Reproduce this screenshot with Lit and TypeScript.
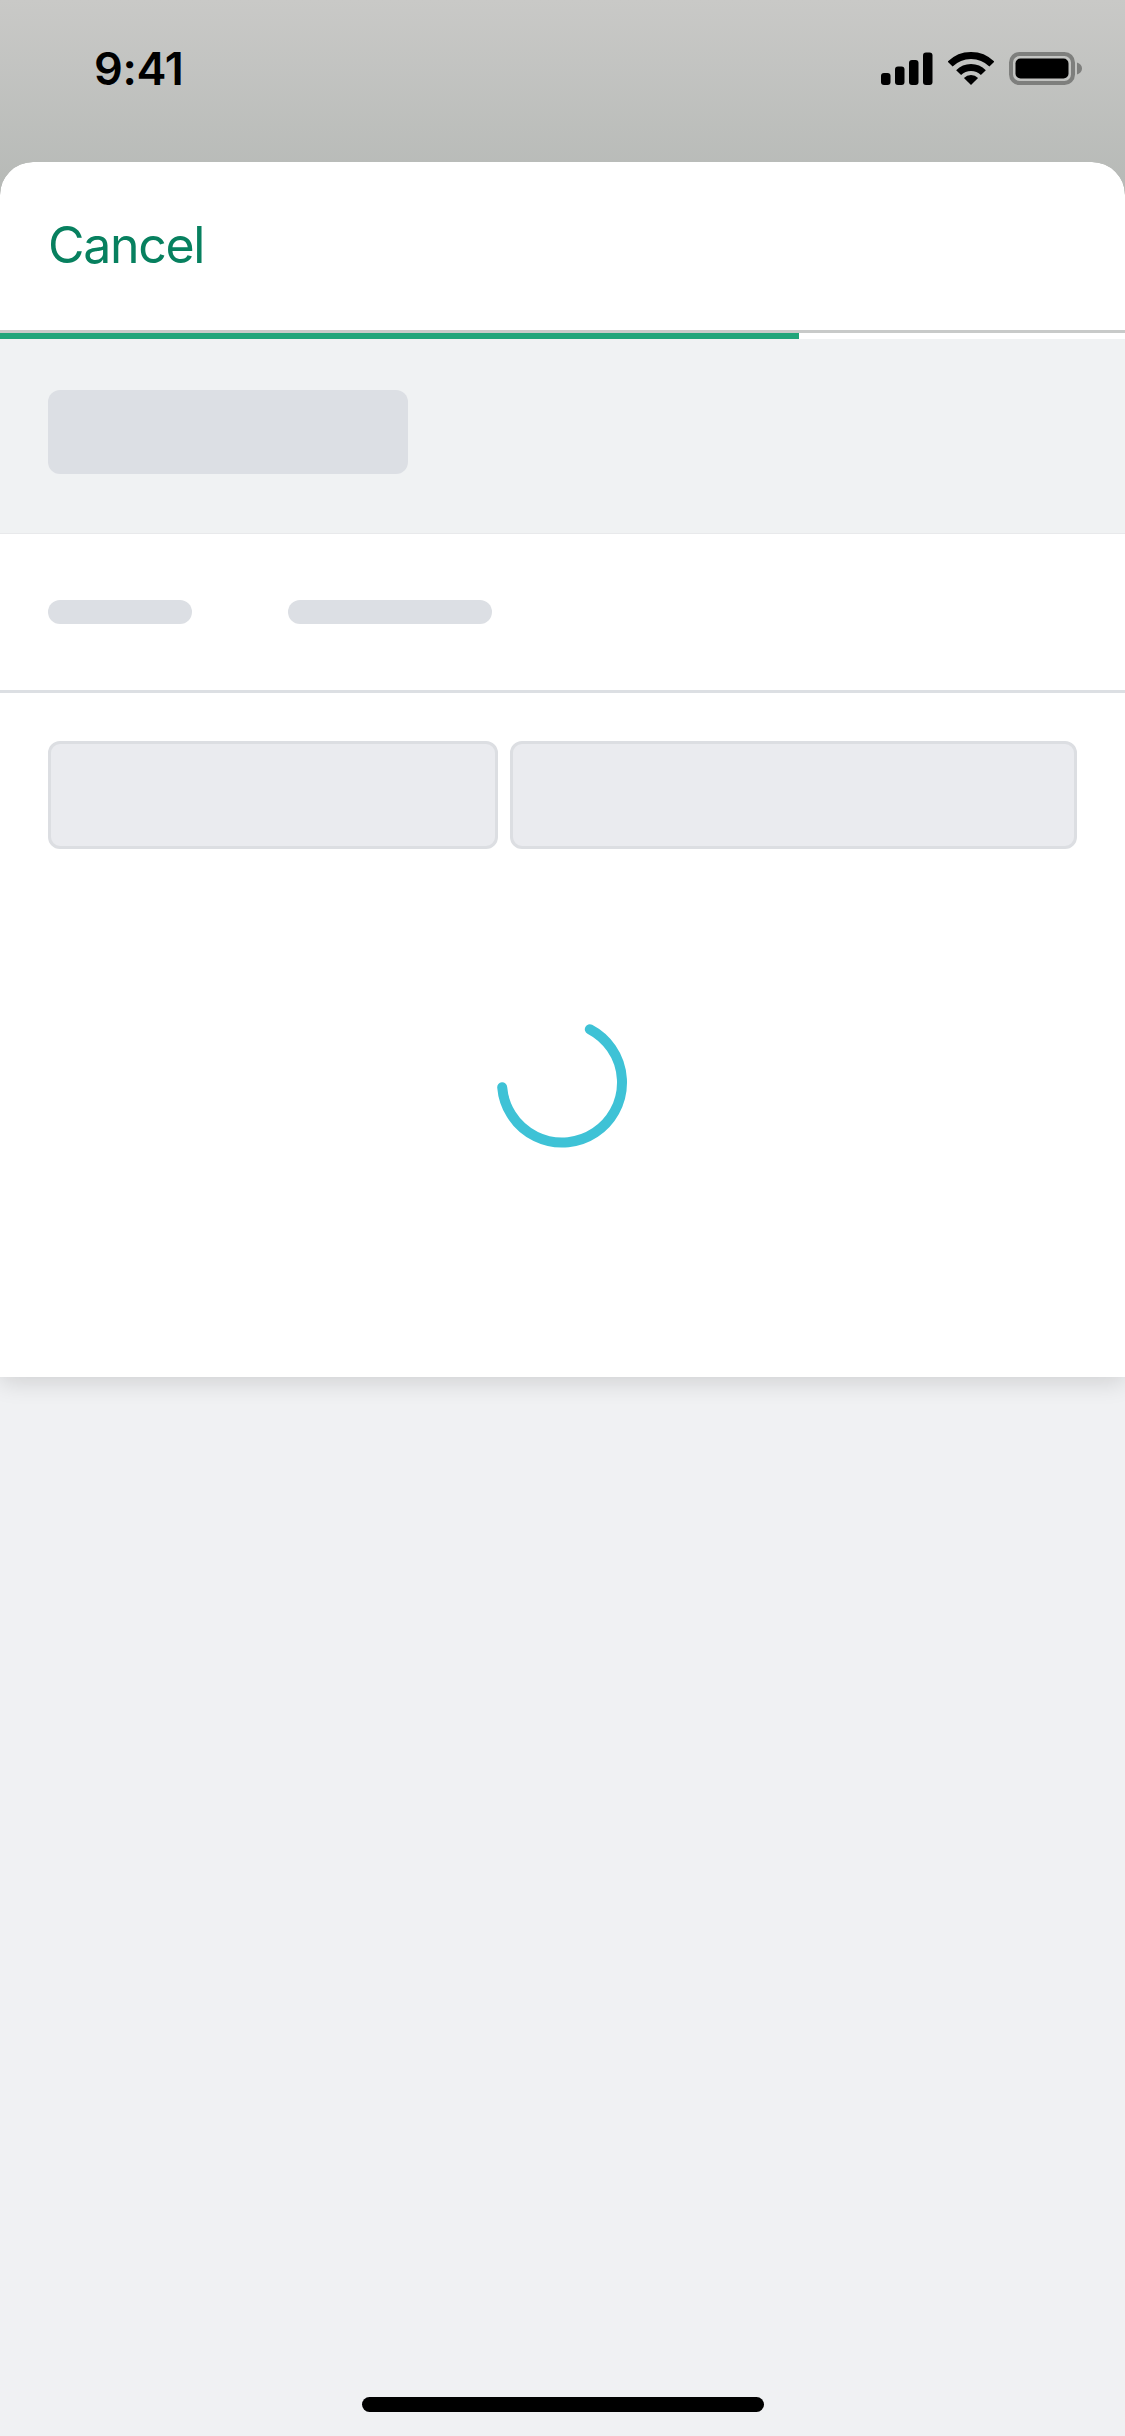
import { LitElement, css, html } from 'lit';
import { customElement } from 'lit/decorators.js';

@customElement('app-root')
export class AppRoot extends LitElement {
  static styles = css`
    :host {
      display: flex;
      flex-direction: column;
      height: 2436px;
      background: #f0f1f3;
      font-family: Inter, 'Liberation Sans', sans-serif;
    }

    .top {
      background: linear-gradient(#c9c9c7, #b6b9b6) no-repeat;
      background-size: 100% 196px;
    }

    .status-bar {
      height: 162px;
      box-sizing: border-box;
      padding: 0 43px 0 94px;
      display: flex;
      justify-content: space-between;
      align-items: flex-start;
    }

    .time {
      margin-top: 42px;
      font-size: 45px;
      line-height: 54px;
      font-weight: 600;
      color: #000;
      letter-spacing: -0.3px;
    }

    .status-icons {
      margin-top: 52px;
      display: flex;
      align-items: flex-start;
      gap: 15px;
    }

    .sheet {
      background: #fff;
      border-radius: 33px 33px 0 0;
      box-shadow: 0 5px 24px rgba(0, 0, 0, 0.14);
      clip-path: inset(0 0 -60px 0 round 33px 33px 0 0);
    }

    .sheet-header {
      height: 171px;
      box-sizing: border-box;
      padding: 0 48px;
      display: flex;
      align-items: center;
      border-bottom: 3px solid #c8cac9;
    }

    .cancel {
      font-size: 50px;
      line-height: 60px;
      letter-spacing: -1.3px;
      color: #07805f;
      margin-top: -3px;
    }

    .progress {
      height: 6px;
      background: #fff;
    }

    .progress-fill {
      height: 100%;
      background: #20a57a;
    }

    .summary {
      height: 195px;
      box-sizing: border-box;
      padding: 51px 48px 0;
      background: #f0f2f3;
      border-bottom: 1px solid #e8e9eb;
    }

    .skeleton {
      background: #dcdfe4;
    }

    .skeleton-title {
      width: 360px;
      height: 84px;
      border-radius: 12px;
    }

    .tabs {
      height: 159px;
      box-sizing: border-box;
      padding: 0 48px;
      display: flex;
      align-items: center;
      gap: 96px;
      border-bottom: 3px solid #dcdfe3;
    }

    .skeleton-pill {
      height: 24px;
      border-radius: 12px;
    }

    .options {
      padding: 48px 48px 0;
      display: grid;
      grid-template-columns: 450px 567px;
      gap: 12px;
    }

    .option {
      height: 108px;
      box-sizing: border-box;
      background: #eaebef;
      border: 3px solid #dcdee2;
      border-radius: 12px;
    }

    .loading {
      height: 528px;
      box-sizing: border-box;
      padding-top: 167px;
      display: flex;
      justify-content: center;
      align-items: flex-start;
    }

    .spinner {
      display: block;
    }

    .spacer {
      flex: 1;
    }

    .home-bar {
      align-self: center;
      width: 402px;
      height: 15px;
      margin-bottom: 24px;
      border-radius: 8px;
      background: #000;
    }
  `;

  render() {
    return html`
      <div class="top">
        <div class="status-bar">
          <span class="time">9:41</span>
          <div class="status-icons">
            <svg width="52" height="33" viewBox="0 0 52 33" fill="#000">
              <rect x="0" y="21" width="9.5" height="12" rx="3" />
              <rect x="14" y="14.5" width="9.5" height="18.5" rx="3" />
              <rect x="28" y="8" width="9.5" height="25" rx="3" />
              <rect x="42" y="0.5" width="9.5" height="32.5" rx="3" />
            </svg>
            <svg width="46" height="33" viewBox="0 0 46 33">
              <path d="M2.14 12.14A29.5 29.5 0 0 1 43.86 12.14" fill="none" stroke="#000" stroke-width="7" />
              <path d="M10.63 20.63A17.5 17.5 0 0 1 35.37 20.63" fill="none" stroke="#000" stroke-width="7" />
              <path d="M23 33L15.93 25.93A10 10 0 0 1 30.07 25.93Z" fill="#000" />
            </svg>
            <svg width="73" height="33" viewBox="0 0 73 33">
              <rect x="2" y="2" width="62" height="29" rx="8.5" fill="none" stroke="#7e7f7d" stroke-width="4" />
              <rect x="6.5" y="6.5" width="53" height="20" rx="5" fill="#000" />
              <path d="M68 10.5C71 11.5 73 13.5 73 16.5C73 19.5 71 21.5 68 22.5Z" fill="#7e7f7d" />
            </svg>
          </div>
        </div>
        <div class="sheet">
          <div class="sheet-header"><span class="cancel">Cancel</span></div>
          <div class="progress">
            <div class="progress-fill" style="width: ${(799 / 1125) * 100}%"></div>
          </div>
          <div class="summary"><div class="skeleton skeleton-title"></div></div>
          <div class="tabs">
            <div class="skeleton skeleton-pill" style="width: 144px"></div>
            <div class="skeleton skeleton-pill" style="width: 204px"></div>
          </div>
          <div class="options">
            <div class="option"></div>
            <div class="option"></div>
          </div>
          <div class="loading">
            <svg class="spinner" width="132" height="132" viewBox="0 0 132 132">
              <path d="M92.8 13.3A60 60 0 1 1 5.2 71.3" fill="none" stroke="#3ec2d6" stroke-width="10" stroke-linecap="round" />
            </svg>
          </div>
        </div>
      </div>
      <div class="spacer"></div>
      <div class="home-bar"></div>
    `;
  }
}

declare global {
  interface HTMLElementTagNameMap {
    'app-root': AppRoot;
  }
}
